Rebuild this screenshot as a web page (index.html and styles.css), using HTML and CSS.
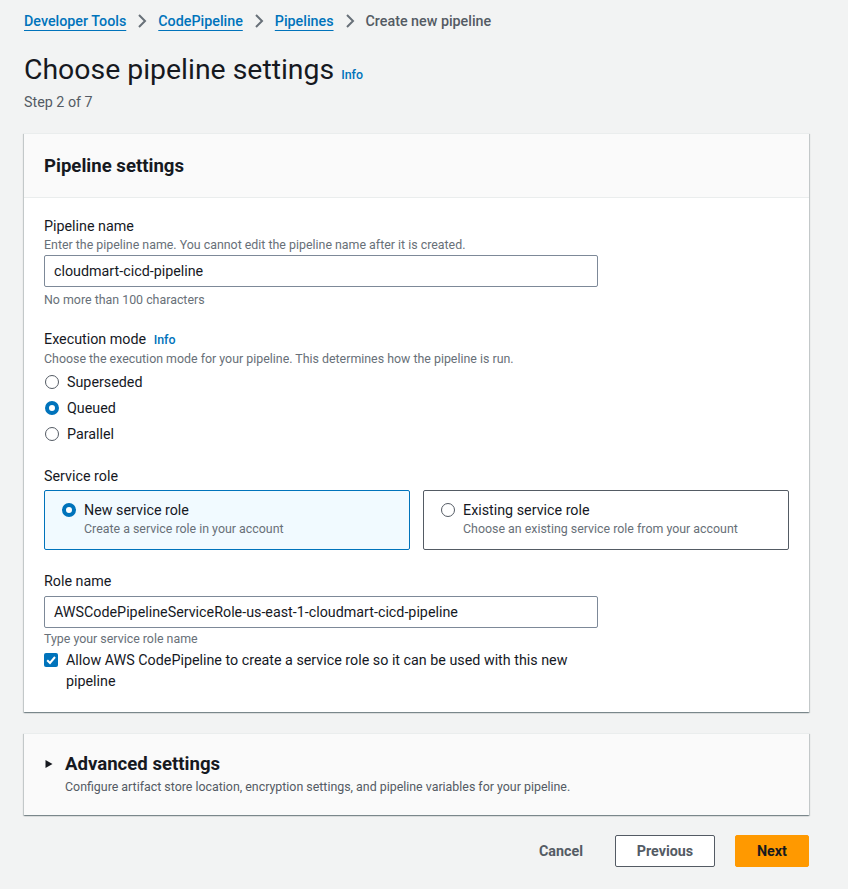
FILE: index.html
```html
<!DOCTYPE html>
<html lang="en">
<head>
<meta charset="utf-8">
<title>Choose pipeline settings</title>
<link rel="stylesheet" href="styles.css">
</head>
<body>
<div class="page">
  <nav class="crumbs">
    <a class="crumb-link" href="#">Developer Tools</a>
    <svg class="chev" viewBox="0 0 16 16" width="16" height="16"><polyline points="5,2 11,8 5,14" fill="none" stroke="#687078" stroke-width="2"/></svg>
    <a class="crumb-link" href="#">CodePipeline</a>
    <svg class="chev" viewBox="0 0 16 16" width="16" height="16"><polyline points="5,2 11,8 5,14" fill="none" stroke="#687078" stroke-width="2"/></svg>
    <a class="crumb-link" href="#">Pipelines</a>
    <svg class="chev" viewBox="0 0 16 16" width="16" height="16"><polyline points="5,2 11,8 5,14" fill="none" stroke="#687078" stroke-width="2"/></svg>
    <span class="crumb-current">Create new pipeline</span>
  </nav>

  <div class="title-row">
    <h1 class="title">Choose pipeline settings</h1>
    <a class="info" href="#">Info</a>
  </div>
  <div class="step">Step 2 of 7</div>

  <section class="panel">
    <div class="panel-header">
      <h2 class="panel-title">Pipeline settings</h2>
    </div>
    <div class="panel-body">
      <div class="field">
        <div class="label">Pipeline name</div>
        <div class="desc">Enter the pipeline name. You cannot edit the pipeline name after it is created.</div>
        <div class="input">cloudmart-cicd-pipeline</div>
        <div class="hint">No more than 100 characters</div>
      </div>

      <div class="field field-exec">
        <div class="label">Execution mode <a class="info info-sm" href="#">Info</a></div>
        <div class="desc">Choose the execution mode for your pipeline. This determines how the pipeline is run.</div>
        <div class="radios">
          <div class="radio-row"><span class="radio"></span><span>Superseded</span></div>
          <div class="radio-row"><span class="radio radio-on"></span><span>Queued</span></div>
          <div class="radio-row"><span class="radio"></span><span>Parallel</span></div>
        </div>
      </div>

      <div class="field field-role">
        <div class="label">Service role</div>
        <div class="tiles">
          <div class="tile tile-on">
            <span class="radio radio-on tile-radio"></span>
            <div>
              <div class="tile-title">New service role</div>
              <div class="tile-desc">Create a service role in your account</div>
            </div>
          </div>
          <div class="tile">
            <span class="radio tile-radio"></span>
            <div>
              <div class="tile-title">Existing service role</div>
              <div class="tile-desc">Choose an existing service role from your account</div>
            </div>
          </div>
        </div>
      </div>

      <div class="field field-rolename">
        <div class="label">Role name</div>
        <div class="input input-tight">AWSCodePipelineServiceRole-us-east-1-cloudmart-cicd-pipeline</div>
        <div class="hint hint-tight">Type your service role name</div>
        <div class="check-row">
          <span class="checkbox"><svg viewBox="0 0 14 14" width="14" height="14"><polyline points="3.2,7.2 6,10 11,4" fill="none" stroke="#fff" stroke-width="2"/></svg></span>
          <span class="check-text">Allow AWS CodePipeline to create a service role so it can be used with this new pipeline</span>
        </div>
      </div>
    </div>
  </section>

  <section class="panel adv">
    <div class="adv-head">
      <svg class="caret" viewBox="0 0 10 10" width="10" height="10"><polygon points="1.5,1 8.5,5 1.5,9" fill="#16191f"/></svg>
      <h2 class="panel-title">Advanced settings</h2>
    </div>
    <div class="adv-desc">Configure artifact store location, encryption settings, and pipeline variables for your pipeline.</div>
  </section>

  <div class="actions">
    <button class="btn btn-link">Cancel</button>
    <button class="btn btn-normal">Previous</button>
    <button class="btn btn-primary">Next</button>
  </div>
</div>
</body>
</html>
```
FILE: styles.css
```css
* { box-sizing: border-box; }
html, body { margin: 0; padding: 0; }
body {
  background: #f2f3f3;
  font-family: Roboto, "Liberation Sans", Arial, sans-serif;
  font-size: 14.3px;
  line-height: 22px;
  color: #16191f;
}
.page {
  width: 785px;
  margin-left: 24px;
  padding-top: 10px;
}
.crumbs {
  display: flex;
  align-items: center;
  gap: 7px;
  height: 22px;
}
.crumb-link {
  color: #0073bb;
  text-decoration: underline;
  text-underline-offset: 4px;
  font-weight: 500;
}
.chev { margin: 0 1px; }
.crumb-current { color: #545b64; font-weight: 500; }

.title-row {
  display: flex;
  align-items: baseline;
  gap: 7px;
  margin-top: 20px;
}
.title {
  margin: 0;
  font-size: 28.4px;
  line-height: 36px;
  font-weight: 400;
  color: #16191f;
}
.info {
  color: #0073bb;
  font-size: 12.4px;
  font-weight: 500;
  text-decoration: none;
}
.step {
  margin-top: 3px;
  color: #545b64;
}

.panel {
  margin-top: 20px;
  background: #fff;
  border-top: 1px solid #eaeded;
  box-shadow: 0 1px 1px 0 rgba(0, 28, 36, 0.3), 1px 1px 1px 0 rgba(0, 28, 36, 0.15), -1px 1px 1px 0 rgba(0, 28, 36, 0.15);
}
.panel-header {
  background: #fafafa;
  border-bottom: 1px solid #eaeded;
  padding: 20px 20px 19px;
}
.panel-title {
  margin: 0;
  font-size: 18.6px;
  line-height: 24px;
  font-weight: 700;
}
.panel-body {
  padding: 17px 20px 20px;
}
.label { color: #16191f; }
.desc, .hint {
  font-size: 12.4px;
  line-height: 16px;
  color: #687078;
}
.input {
  width: 554px;
  height: 32px;
  margin-top: 2px;
  border: 1px solid #7d8998;
  border-radius: 2px;
  padding: 0 9px;
  line-height: 30px;
  background: #fff;
}
.hint { margin-top: 5px; }
.field-exec { margin-top: 20px; }
.info-sm { margin-left: 4px; }
.radios { margin-top: 2px; }
.radio-row {
  display: flex;
  align-items: center;
  gap: 8px;
  height: 26px;
}
.radio {
  flex: none;
  width: 14px;
  height: 14px;
  border-radius: 50%;
  border: 1.5px solid #545b64;
  background: #fff;
  margin-left: 1px;
}
.radio-on {
  border: 4px solid #0073bb;
}
.field-role { margin-top: 18px; }
.tiles {
  margin-top: 3px;
  display: grid;
  grid-template-columns: 1fr 1fr;
  gap: 13px;
}
.tile {
  display: flex;
  gap: 8px;
  border: 1px solid #545b64;
  border-radius: 2px;
  padding: 8px 16px 11px;
  height: 60px;
  background: #fff;
}
.tile-on {
  background: #f1faff;
  border-color: #0073bb;
}
.tile-radio { margin-top: 4px; }
.tile-title { line-height: 22px; }
.tile-desc {
  font-size: 12.4px;
  line-height: 16px;
  color: #687078;
}
.field-rolename { margin-top: 20px; }
.input-tight { margin-top: 4px; }
.hint-tight { margin-top: 3px; }
.check-row {
  display: flex;
  align-items: flex-start;
  gap: 8px;
  width: 554px;
  margin-top: 3px;
}
.checkbox {
  flex: none;
  width: 14px;
  height: 14px;
  margin-top: 3px;
  background: #0073bb;
  border-radius: 2px;
  display: flex;
}
.check-text { line-height: 21px; }

.adv {
  margin-top: 21px;
  background: #fafafa;
  padding: 18px 20px 20px;
}
.adv-head {
  display: flex;
  align-items: center;
  gap: 11px;
}
.adv-desc {
  margin-top: 3px;
  margin-left: 21px;
  font-size: 12.4px;
  line-height: 16px;
  color: #545b64;
}

.actions {
  display: flex;
  justify-content: flex-end;
  align-items: center;
  gap: 20px;
  margin-top: 20px;
}
.btn {
  height: 32px;
  padding: 0 20px;
  font-family: inherit;
  font-size: 14.3px;
  font-weight: 700;
  border-radius: 2px;
  cursor: pointer;
}
.btn-link {
  background: transparent;
  border: 1px solid transparent;
  color: #545b64;
  margin-right: -9px;
}
.btn-normal {
  width: 100px;
  background: #fff;
  border: 1px solid #545b64;
  color: #545b64;
}
.btn-primary {
  width: 74px;
  background: #ff9900;
  border: 1px solid #ff9900;
  color: #16191f;
}
```
